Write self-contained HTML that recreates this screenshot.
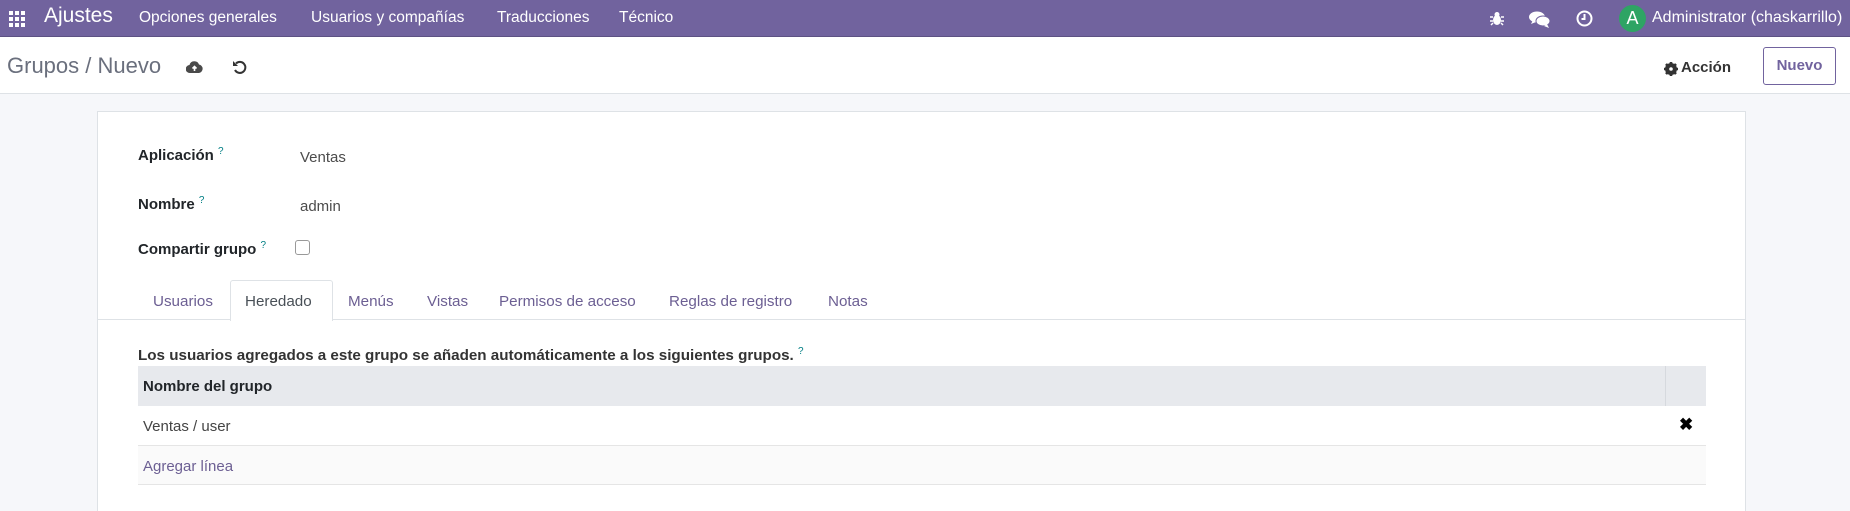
<!DOCTYPE html>
<html><head><meta charset="utf-8"><style>
*{box-sizing:border-box;margin:0;padding:0}
html{width:1850px;height:511px;overflow:hidden}
body{width:1850px;height:511px;overflow:hidden;background:#f6f7fa;font-family:"Liberation Sans",sans-serif;color:#212529;position:relative}
.a{position:absolute;white-space:nowrap}
.nav{position:absolute;left:0;top:0;width:1850px;height:37px;background:#71639e;border-bottom:1px solid #5d5283}
.nav .a{color:#fff;font-size:15.5px;top:9px}
.cp{position:absolute;left:0;top:37px;width:1850px;height:57px;background:#fff;border-bottom:1px solid #dee2e6}
.sheet{position:absolute;left:97px;top:111px;width:1649px;height:400px;background:#fff;border:1px solid #dee2e6;border-bottom:none}
.lbl{font-weight:bold;font-size:15px;color:#212529}
.q{color:#017e84;font-size:10px;vertical-align:super;font-weight:normal}
.val{font-size:15px;color:#4c4c4c}
.tab{font-size:15.2px;color:#6c5f93;top:293px}
</style></head><body>
<div class="nav">
  <svg class="a" style="left:9px;top:11px" width="16" height="16" viewBox="0 0 16 16" fill="#fff"><rect x="0" y="0" width="4" height="4"/><rect x="6" y="0" width="4" height="4"/><rect x="12" y="0" width="4" height="4"/><rect x="0" y="6" width="4" height="4"/><rect x="6" y="6" width="4" height="4"/><rect x="12" y="6" width="4" height="4"/><rect x="0" y="12" width="4" height="4"/><rect x="6" y="12" width="4" height="4"/><rect x="12" y="12" width="4" height="4"/></svg>
  <div class="a" style="left:44px;top:4px;font-size:21px">Ajustes</div>
  <div class="a" style="left:139px">Opciones generales</div>
  <div class="a" style="left:311px">Usuarios y compañías</div>
  <div class="a" style="left:497px">Traducciones</div>
  <div class="a" style="left:619px">Técnico</div>
  <svg class="a" style="left:1490px;top:11px" width="14" height="15" viewBox="0 0 14 15" fill="#fff"><ellipse cx="7" cy="9" rx="4" ry="5"/><circle cx="7" cy="3.5" r="2.5"/><path d="M0 6h3M11 6h3M0 10h3M11 10h3M1 14l2-2M13 14l-2-2" stroke="#fff" stroke-width="1.5"/></svg>
  <svg class="a" style="left:1529px;top:11px" width="22" height="17" viewBox="0 0 22 17" fill="#fff"><ellipse cx="8" cy="6" rx="8" ry="5.5"/><path d="M2 13l2-4 3 2z"/><ellipse cx="14" cy="10" rx="7" ry="5" stroke="#71639e" stroke-width="1"/><path d="M20 17l-2-4-3 2z"/></svg>
  <svg class="a" style="left:1576px;top:10px" width="17" height="17" viewBox="0 0 17 17"><circle cx="8.5" cy="8.5" r="7" fill="none" stroke="#fff" stroke-width="2"/><path d="M8.5 4v5h-3" fill="none" stroke="#fff" stroke-width="2"/></svg>
  <div class="a" style="left:1619px;top:5px;width:27px;height:27px;border-radius:50%;background:#2ea464;color:#fff;font-size:18px;text-align:center;line-height:27px">A</div>
  <div class="a" style="left:1652px;top:9px;font-size:16px">Administrator (chaskarrillo)</div>
</div>
<div class="cp">
  <div class="a" style="left:7px;top:16px;font-size:22px;color:#6a6f7d">Grupos / Nuevo</div>
  <svg class="a" style="left:186px;top:24px" width="17" height="13" viewBox="0 0 17 13"><path d="M4 12a4 4 0 0 1-.5-8A5 5 0 0 1 13 3.5a4.3 4.3 0 0 1 0 8.5z" fill="#4a4a4a"/><path d="M8.5 10V6M6.5 7.5l2-2 2 2" stroke="#fff" stroke-width="1.6" fill="none"/></svg>
  <svg class="a" style="left:232px;top:23px" width="15" height="15" viewBox="0 0 15 15"><path d="M4 3.5A5.5 5.5 0 1 1 3 10" fill="none" stroke="#333" stroke-width="2"/><path d="M1 1v5h5z" fill="#333"/></svg>
  <svg class="a" style="left:1664px;top:25px" width="14" height="14" viewBox="0 0 14 14"><circle cx="7" cy="7" r="4.5" fill="none" stroke="#333" stroke-width="3"/><path d="M7 0v14M0 7h14M2 2l10 10M12 2L2 12" stroke="#333" stroke-width="2.6"/><circle cx="7" cy="7" r="1.8" fill="#fff"/></svg>
  <div class="a" style="left:1681px;top:22px;font-size:15px;font-weight:bold;color:#333">Acción</div>
  <div class="a" style="left:1763px;top:10px;width:73px;height:38px;border:1px solid #71639e;border-radius:3px;color:#71639e;font-size:15px;font-weight:bold;text-align:center;line-height:36px">Nuevo</div>
</div>
<div class="sheet"></div>
<div class="a lbl" style="left:138px;top:146px">Aplicación <span class="q">?</span></div>
<div class="a val" style="left:300px;top:149px">Ventas</div>
<div class="a lbl" style="left:138px;top:195px">Nombre <span class="q">?</span></div>
<div class="a val" style="left:300px;top:198px">admin</div>
<div class="a lbl" style="left:138px;top:240px">Compartir grupo <span class="q">?</span></div>
<div class="a" style="left:295px;top:240px;width:15px;height:15px;border:1px solid #999;border-radius:3px"></div>
<div class="a" style="left:98px;top:319px;width:1647px;height:1px;background:#dee2e6"></div>
<div class="a" style="left:230px;top:280px;width:103px;height:41px;background:#fff;border:1px solid #dee2e6;border-bottom:none;border-radius:3px 3px 0 0"></div>
<div class="a tab" style="left:153px">Usuarios</div>
<div class="a tab" style="left:245px;color:#495057">Heredado</div>
<div class="a tab" style="left:348px">Menús</div>
<div class="a tab" style="left:427px">Vistas</div>
<div class="a tab" style="left:499px">Permisos de acceso</div>
<div class="a tab" style="left:669px">Reglas de registro</div>
<div class="a tab" style="left:828px">Notas</div>
<div class="a" style="left:138px;top:346px;font-size:15.2px;font-weight:bold;color:#333">Los usuarios agregados a este grupo se añaden automáticamente a los siguientes grupos. <span class="q">?</span></div>
<div class="a" style="left:138px;top:366px;width:1568px;height:40px;background:#e7e9ed"></div>
<div class="a" style="left:1665px;top:366px;width:1px;height:40px;background:#d6d9de"></div>
<div class="a" style="left:143px;top:378px;font-size:15px;font-weight:bold">Nombre del grupo</div>
<div class="a" style="left:143px;top:418px;font-size:15px;color:#444">Ventas / user</div>
<div class="a" style="left:1679px;top:415px;font-size:17px;font-weight:bold;color:#000">✖</div>
<div class="a" style="left:138px;top:445px;width:1568px;height:40px;background:#fafafa;border-top:1px solid #e5e5e5;border-bottom:1px solid #e5e5e5"></div>
<div class="a" style="left:143px;top:458px;font-size:15px;color:#6c5f93">Agregar línea</div>
</body></html>
